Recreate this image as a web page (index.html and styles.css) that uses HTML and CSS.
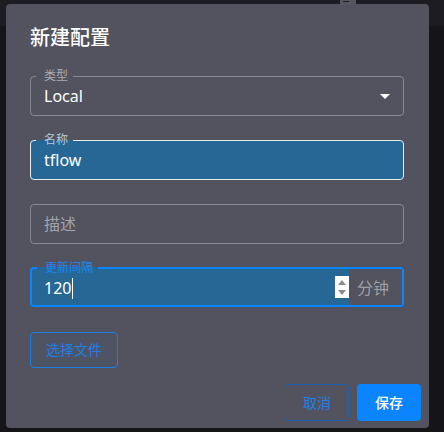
FILE: index.html
```html
<!DOCTYPE html>
<html lang="zh-CN">

<head>
    <meta charset="UTF-8">
    <meta name="viewport" content="width=device-width, initial-scale=1.0">
    <title>新建配置</title>
    <link rel="stylesheet" href="styles.css">
</head>

<body>
    <div class="page">
        <div class="topbar">
            <span class="top-btn"></span>
        </div>
    </div>

    <div class="dialog">
        <h2 class="dialog-title">新建配置</h2>

        <div class="form">
            <fieldset class="field">
                <legend>类型</legend>
                <div class="value select">
                    <span>Local</span>
                    <span class="arrow"></span>
                </div>
            </fieldset>

            <fieldset class="field filled">
                <legend>名称</legend>
                <div class="value">tflow</div>
            </fieldset>

            <fieldset class="field no-label">
                <div class="value placeholder">描述</div>
            </fieldset>

            <fieldset class="field focused">
                <legend>更新间隔</legend>
                <div class="value number">
                    <span>120</span><span class="caret"></span>
                </div>
                <div class="spinner">
                    <span class="up"></span>
                    <span class="down"></span>
                </div>
                <div class="suffix">分钟</div>
            </fieldset>

            <div>
                <button class="btn btn-outline">选择文件</button>
            </div>
        </div>

        <div class="actions">
            <button class="btn btn-cancel">取消</button>
            <button class="btn btn-primary">保存</button>
        </div>
    </div>
</body>

</html>
```

FILE: styles.css
```css
body {
    margin: 0;
    font-family: 'Noto Sans', 'Noto Sans CJK SC', sans-serif;
    background: #141419;
    color: #fff;
    width: 444px;
    height: 432px;
    overflow: hidden;
}

.topbar {
    height: 26px;
    background: #1c1c22;
    position: relative;
}

.top-btn {
    position: absolute;
    left: 340px;
    top: 0;
    width: 16px;
    height: 8px;
    background: #55565f;
}

.top-btn::after {
    content: '';
    position: absolute;
    left: 3px;
    top: 1px;
    width: 6px;
    height: 1px;
    background: #1c1c22;
}

/* modal dialog */
.dialog {
    position: absolute;
    left: 6px;
    top: 4px;
    width: 423px;
    height: 424px;
    box-sizing: border-box;
    padding: 20px 8px 7px 24px;
    background: #52535e;
    border-radius: 4px;
    display: flex;
    flex-direction: column;
}

.dialog-title {
    margin: 0 0 18px;
    font-size: 20px;
    line-height: 28px;
    font-weight: 500;
}

.form {
    display: flex;
    flex-direction: column;
    gap: 18px;
    padding-right: 17px;
}

.field {
    margin: 0;
    padding: 2px 13px 7px;
    border: 1px solid #878893;
    border-radius: 4px;
    min-width: 0;
}

.field legend {
    margin-left: -8px;
    padding: 0 5px 0 8px;
    font-size: 12px;
    line-height: 12px;
    color: #abacb3;
}

.field.no-label {
    margin-top: 6px;
    padding-top: 7px;
}

.value {
    font-size: 16px;
    line-height: 24px;
    color: #fff;
}

.select {
    display: flex;
    justify-content: space-between;
    align-items: center;
}

.arrow {
    width: 0;
    height: 0;
    border-left: 5px solid transparent;
    border-right: 5px solid transparent;
    border-top: 5px solid #fff;
    margin-right: 0;
}

.placeholder {
    color: #a3a4ab;
}

.filled {
    background: #266796;
    border-color: #ececec;
}

.filled legend {
    color: #b5c6d6;
}

.focused {
    display: flex;
    background: #266796;
    border: 2px solid #0a84ff;
    padding: 2px 0 5px 12px;
}

.focused legend {
    margin-left: -7px;
    color: #1f86f0;
}

.number {
    flex: 1;
    display: flex;
    align-items: center;
}

.caret {
    width: 1px;
    height: 21px;
    background: #fff;
    margin-left: 1px;
}

.spinner {
    width: 14px;
    height: 22px;
    background: #fff;
    display: flex;
    flex-direction: column;
    align-items: center;
    justify-content: center;
    gap: 5px;
}

.spinner .up {
    border-left: 4px solid transparent;
    border-right: 4px solid transparent;
    border-bottom: 5px solid #8c8c8c;
}

.spinner .down {
    border-left: 4px solid transparent;
    border-right: 4px solid transparent;
    border-top: 5px solid #8c8c8c;
}

.suffix {
    margin: -7px 0 -5px;
    padding: 0 13px 0 8px;
    background: #52535e;
    display: flex;
    align-items: center;
    font-size: 16px;
    color: #9d9ea6;
}

.btn {
    font-family: inherit;
    font-size: 14px;
    line-height: 20px;
    border-radius: 4px;
    cursor: pointer;
}

.btn-outline {
    width: 88px;
    height: 36px;
    background: rgba(10, 132, 255, 0.04);
    border: 1px solid #1e7fe4;
    color: #1c80e4;
    padding: 0;
    margin-top: 7px;
}

.actions {
    margin-top: auto;
    display: flex;
    justify-content: flex-end;
    gap: 8px;
}

.btn-cancel {
    width: 64px;
    height: 37px;
    background: transparent;
    border: 1px solid #1d62b0;
    color: #1f80e6;
}

.btn-primary {
    width: 64px;
    height: 37px;
    background: #0a84ff;
    border: none;
    color: #fff;
    font-weight: 500;
}
```
